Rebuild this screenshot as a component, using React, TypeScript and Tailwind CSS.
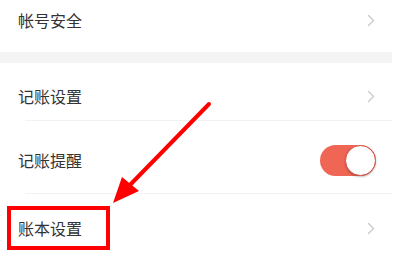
import React from "react";

const font = { fontFamily: '"Noto Sans CJK SC", "Noto Sans", sans-serif' };

function Chevron() {
	return (
		<svg width="8" height="13" viewBox="0 0 8 13" fill="none">
			<path d="M1.5 1.5 L6.5 6.5 L1.5 11.5" stroke="#c9c9c9" strokeWidth="1.3" strokeLinecap="round" strokeLinejoin="round" />
		</svg>
	);
}

function Toggle() {
	return (
		<div className="relative w-[56px] h-[31px] rounded-full bg-[#ef6655]">
			<div className="absolute right-0 top-0 w-[31px] h-[31px] rounded-full bg-white border border-[#d9534a] shadow-[0_1px_2px_rgba(0,0,0,0.25)]" />
		</div>
	);
}

export default function App() {
	return (
		<div className="relative w-[402px] h-[255px] bg-white overflow-hidden" style={font}>
			{/* 帐号安全 */}
			<div className="h-[52px] flex items-start justify-between pl-[18px] pr-[27px] pt-[10px]">
				<span className="text-[16px] leading-[20px] text-[#333]">帐号安全</span>
				<div className="pt-[4px]"><Chevron /></div>
			</div>

			{/* 分隔带 */}
			<div className="h-[11px] mr-[10px] bg-[#f4f4f4]" />

			{/* 记账设置 */}
			<div className="h-[57px] flex items-start justify-between pl-[18px] pr-[27px] pt-[23px]">
				<span className="text-[16px] leading-[20px] text-[#333]">记账设置</span>
				<div className="pt-[4px]"><Chevron /></div>
			</div>
			<div className="h-px ml-[25px] mr-[10px] bg-[#f2f2f2]" />

			{/* 记账提醒 */}
			<div className="h-[72px] flex items-center justify-between pl-[18px] pr-[26px] pt-[6px]">
				<span className="text-[16px] leading-[20px] text-[#333]">记账提醒</span>
				<Toggle />
			</div>
			<div className="h-px ml-[25px] mr-[10px] bg-[#f2f2f2]" />

			{/* 账本设置 */}
			<div className="h-[61px] flex items-center justify-between pl-[18px] pr-[27px] pt-[7px]">
				<span className="text-[16px] leading-[20px] text-[#333]">账本设置</span>
				<Chevron />
			</div>

			{/* 标注 */}
			<div className="absolute left-[7px] top-[206px] w-[103px] h-[44px] border-4 border-[#ff0000]" />
			<svg className="absolute left-0 top-0 pointer-events-none" width="402" height="255" viewBox="0 0 402 255">
				<line x1="209" y1="104" x2="128" y2="187" stroke="#ff0000" strokeWidth="4" strokeLinecap="round" />
				<polygon points="113,203 122,177 139,191" fill="#ff0000" />
			</svg>
		</div>
	);
}
